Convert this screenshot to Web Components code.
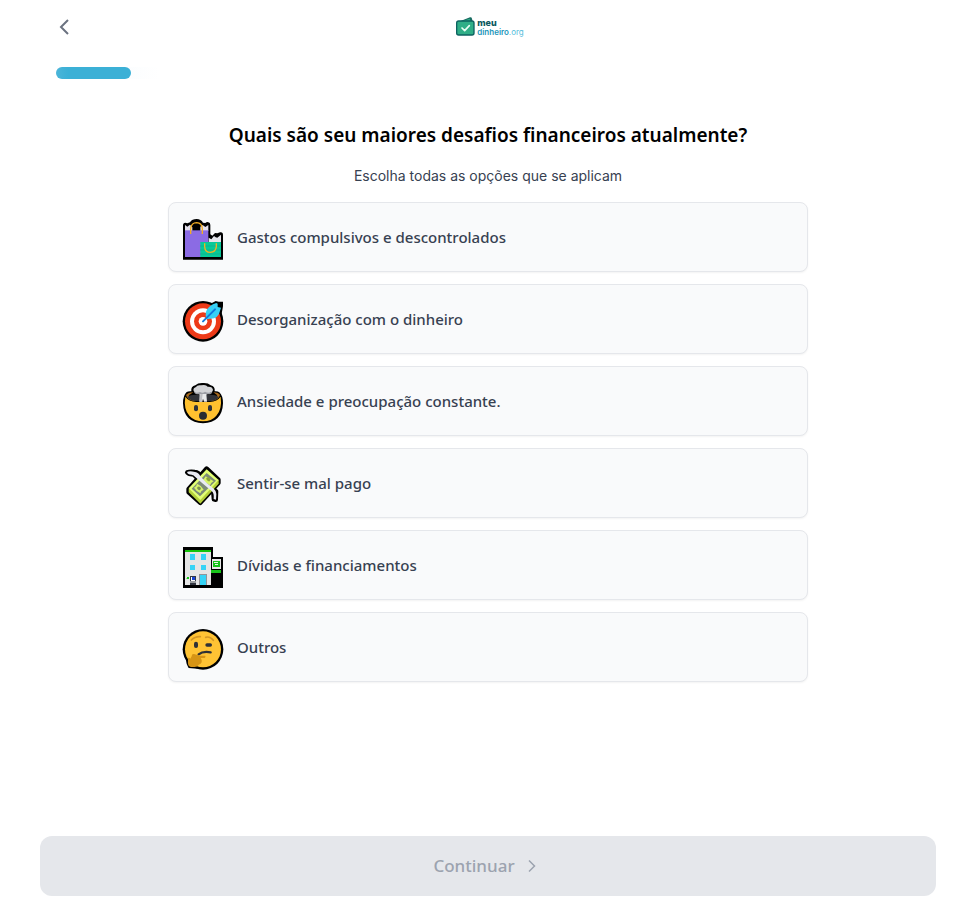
<!DOCTYPE html>
<html lang="pt-BR">
<head>
<meta charset="utf-8">
<meta name="viewport" content="width=device-width, initial-scale=1">
<title>Meu Dinheiro</title>
<style>
body { margin: 0; background: #fff; color: #000; font-family: "Noto Sans", "Open Sans", sans-serif; }
</style>
</head>
<body>
<quiz-page>
  <quiz-header slot="header"></quiz-header>
  <quiz-progress slot="header" value="9"></quiz-progress>
  <quiz-question>
    <span slot="title">Quais são seu maiores desafios financeiros atualmente?</span>
    <span slot="hint">Escolha todas as opções que se aplicam</span>
    <quiz-option icon="bags">Gastos compulsivos e descontrolados</quiz-option>
    <quiz-option icon="target">Desorganização com o dinheiro</quiz-option>
    <quiz-option icon="mind">Ansiedade e preocupação constante.</quiz-option>
    <quiz-option icon="money">Sentir-se mal pago</quiz-option>
    <quiz-option icon="bank">Dívidas e financiamentos</quiz-option>
    <quiz-option icon="think">Outros</quiz-option>
  </quiz-question>
  <quiz-continue slot="footer">Continuar</quiz-continue>
</quiz-page>
<script>
const icons = {
bags: `<svg viewBox="48 36 126 150" aria-hidden="true">
  <path fill="#000" d="M51 76q0-8 7-8l6 2 8-3q6-10 20-10 13 0 19 11l7 1q5-4 9-2 6 1 6 8v28l6 4 8-8 7 1 8-3q9-2 9 8v74H51z"/>
  <path fill="#e3dfeb" d="M57 93V75l7 5 8-6 7 8v11zM103 93V80l7-5 8 6 9-6v18z"/>
  <path fill="#8b6be4" d="M57 91h70v80H57z"/>
  <path fill="none" stroke="#f3ad22" stroke-width="4" d="M74 102V86q2-18 18-18 16 1 17 18v16"/>
  <path fill="#e4e5ec" d="M128 126v-13l8 5 8-10 5 4 5 1 11-9v22z"/>
  <path fill="#06ca99" d="M103 126h62v45h-62z"/>
  <path stroke="#14aa86" stroke-width="3" stroke-dasharray="4 2" d="M103 138h62M103 150h62M103 162h62"/>
  <path fill="none" stroke="#f0b321" stroke-width="4" d="M116 130v10q1 17 17 17t18-17v-10"/></svg>`,
target: `<svg viewBox="48 30 126 150" aria-hidden="true">
  <circle cx="111" cy="112" r="61"/><path d="M121 66l28-15 9 2h13v14l-4 22-14 24-35 7z"/>
  <circle cx="111" cy="112" r="54" fill="#ed3a18"/><circle cx="111" cy="112" r="39" fill="#fff"/>
  <circle cx="111" cy="112" r="27" fill="#ed3a18"/><circle cx="111" cy="112" r="13" fill="#fff"/>
  <path fill="#38d1f5" d="M119 96q-2-24 22-35l10-4 4 2v10l10 2-2 6q-5 28-32 27l-8 2z"/>
  <path stroke="#1378dc" stroke-width="6" stroke-linecap="round" d="M111 112l36-36"/></svg>`,
mind: `<svg viewBox="48 30 126 150" aria-hidden="true">
  <path d="M51 112q0-24 11-34 6-3 14-2-2-15 12-18 8-8 23-7 15-1 23 7 14 3 12 18 9-1 14 3 11 10 11 33-2 58-60 60-58-2-60-60z"/>
  <path fill="#ffc12f" d="M58 92q10 14 33 16h40q23-2 33-16 5 37-13 57-14 17-40 17t-41-17Q52 129 58 92z"/>
  <path fill="#a8691c" d="M60 87q6-7 22-8l-14 9 10 9 20 8H84q-20-3-24-18zM142 79q16 1 20 8-4 15-26 18h-12l20-8 10-9z"/>
  <path fill="#303238" d="M64 93q12-9 39-6v19q-30 1-39-13zM119 87q27-3 39 6-8 14-39 13z"/>
  <path fill="#d2d3d6" d="M83 75q-3-9 7-12 3-7 15-5 15-4 20 4 15-1 16 10-2 10-18 10H99q-13 2-16-7z"/>
  <path fill="#9c9ea5" d="M84 78q8 4 18 0 8 5 15-1 11 6 22 0-2 9-14 8-8 4-14 0-6 4-13 0-12 0-14-7z"/>
  <path fill="#e8e9eb" d="M101 84h20l2 23h-9l-3-9-2 9h-9z"/><path fill="#bebfc3" d="M103 84h7l-3 23h-6z"/>
  <rect x="84" y="117" width="12" height="19" rx="6" fill="#303238"/><rect x="126" y="117" width="12" height="19" rx="6" fill="#303238"/>
  <circle cx="111" cy="149" r="12" fill="#292c31"/></svg>`,
money: `<svg viewBox="48 30 126 150" aria-hidden="true">
  <g stroke="#000" stroke-width="14" stroke-linejoin="round" fill="#000"><path d="M68 123l54-61 35 33v10l-54 59-35-31z"/>
  <path d="M64 73q8-3 22-1 13 1 17 13l47 45-1 25-5-1-2-23-39-32-20-20-14-2z"/></g>
  <path fill="#b4cf3a" d="M68 122v11l35 34 55-60V95z"/>
  <path fill="#e2ff75" d="M68 121l54-57 36 32-55 60z"/>
  <path fill="#7d8b77" d="M77 122l45-47 28 23-48 47z"/>
  <path fill="#d6f36a" d="M84 119q8-3 9-12 13 5 20 18-8 2-10 11-11-5-19-17zM107 97q8-3 12-12l24 15q-8 3-11 12z"/>
  <ellipse cx="99" cy="121" rx="6" ry="5" fill="#7d9252" transform="rotate(40 99 121)"/>
  <ellipse cx="127" cy="94" rx="7" ry="5" fill="#8ba33d" transform="rotate(40 127 94)"/>
  <path fill="#e9eaf2" d="M63 72q8-4 24 0 12 2 16 13l19 20 20 16q9 8 9 17l-1 17-7-2q2-18-6-24l-28-23-22-20q-3-5-10-6-12 0-14-8z"/></svg>`,
bank: `<svg viewBox="48 30 126 150" shape-rendering="crispEdges" aria-hidden="true">
  <path d="M50 52h91v29h31v92H50z"/><path fill="#e5e5e5" d="M57 66h77v98H57z"/><path fill="#14c30b" d="M57 59h77v8H57z"/>
  <path fill="#36d3f6" d="M72 73h16v16H72zM104 73h15v16h-15zM72 105h16v15H72zM104 105h15v15h-15z"/>
  <path fill="#929398" d="M98 131h25v34H98zM72 137h18v4H72z"/><path fill="#36d3f6" d="M102 136h17v29h-17z"/>
  <path fill="#333742" d="M72 139h18v26H72z"/><path fill="#999ca0" d="M73 154h17v4H73z"/><path fill="#fff" d="M75 140h12v12H75z"/><path fill="#1442d4" d="M77 142h9v8h-9z"/>
  <path fill="#e8e8e8" d="M137 88h28v29h-28z"/><path fill="#17c41a" d="M141 93h20v18h-20zM134 120h31v9h-31zM62 142h8v4h-8z"/>
  <path fill="#e7f8e5" d="M144 96h13v3h-13zM147 102h8v2h-8zM145 107h13v2h-13z"/><path fill="#94e488" d="M59 143h5v3h-5z"/></svg>`,
think: `<svg viewBox="48 30 126 150" aria-hidden="true">
  <circle cx="111" cy="112" r="61"/><path d="M61 135h22l40 26-29 9-26-2q-10-15-7-33z"/>
  <circle cx="111" cy="112" r="54" fill="#ffc334"/>
  <path fill="none" stroke="#d39725" stroke-width="5" stroke-linecap="round" d="M76 84q11-11 27-10M119 76q13-4 23 9"/>
  <rect x="84" y="89" width="12" height="19" rx="6" fill="#2f3136"/><rect x="118" y="94" width="20" height="10" rx="5" fill="#2f3136"/>
  <path fill="none" stroke="#2f3136" stroke-width="7" stroke-linecap="round" d="M98 127q12-10 36-6"/>
  <path fill="#d69415" d="M66 138q5-2 7 2l4-7q0-8 7-7l17 5h17q2 7-5 7h-9q5 6 3 13-2 6-9 7-5 8-14 7H75q-9-2-9-12z"/></svg>`
};

class QuizElement extends HTMLElement {
  constructor() {
    super();
    this.attachShadow({ mode: 'open' }).innerHTML = this.template();
  }
}

customElements.define('quiz-page', class extends QuizElement {
  template() { return `<style>
    :host { display: flex; flex-direction: column; box-sizing: border-box; min-height: 100vh; padding: 0 36px 12px 40px; }
    header { padding: 0 16px; }
    main { flex: 1; padding: 40px 0 24px; }
  </style><header><slot name="header"></slot></header><main><slot></slot></main><footer><slot name="footer"></slot></footer>`; }
});

customElements.define('quiz-header', class extends QuizElement {
  template() { return `<style>
    :host { display: grid; grid-template-columns: 1fr auto 1fr; align-items: center; height: 54px; }
    button { justify-self: start; display: flex; padding: 0; border: 0; background: none; cursor: pointer; }
    a { display: flex; align-items: center; gap: 2px; text-decoration: none; color: #0b5960; padding-left: 4px; }
    .name { display: grid; font: 800 9px/10px Inter, sans-serif; }
    .name span + span { font-weight: 600; font-size: 8px; line-height: 8px; color: #2397bb; }
    small { font-size: 8px; font-weight: 400; color: #55bddb; }
  </style>
  <button type="button" aria-label="Voltar"><svg width="16" height="16" viewBox="0 0 16 16" fill="none" stroke="#6b7280" stroke-width="2"><path d="M12 1L5 8l7 7"/></svg></button>
  <a href="#"><svg width="19" height="20" viewBox="0 0 57 60" aria-hidden="true">
    <path fill="#176b61" d="M8 14L42 1q5-1 6 4l2 9z"/><path fill="#2fae87" d="M19 12l22-7 3 8z"/>
    <rect x="2" y="12" width="52" height="42" rx="6" fill="#2fae87" stroke="#0d6260" stroke-width="4"/>
    <path fill="none" stroke="#e9fff5" stroke-width="5" stroke-linecap="round" stroke-linejoin="round" d="M18 33l8 8 14-15"/></svg>
    <span class="name"><span>meu</span><span>dinheiro<small>.org</small></span></span></a>`; }
});

customElements.define('quiz-progress', class extends QuizElement {
  template() { return `<style>
    :host { display: block; margin-top: 13px; }
    .track { height: 12px; border-radius: 6px; background: linear-gradient(90deg, #f3f9fd, #fff 12%); }
    .bar { height: 12px; width: 75px; border-radius: 6px; background: linear-gradient(90deg, #4bb5d9, #3bb0d6 16%); }
  </style><div class="track" role="progressbar" aria-label="Progresso" aria-valuemin="0" aria-valuemax="100"><div class="bar"></div></div>`; }
  connectedCallback() {
    const value = this.getAttribute('value');
    this.shadowRoot.querySelector('.track').setAttribute('aria-valuenow', value);
  }
});

customElements.define('quiz-question', class extends QuizElement {
  template() { return `<style>
    :host { display: block; max-width: 640px; margin: 0 auto; text-align: center; }
    h1 { margin: 0; font-size: 19px; line-height: 32px; font-weight: 600; }
    p { margin: 15px 0 16px; font: 400 14px/20px Inter, sans-serif; color: #374151; }
    .options { display: grid; gap: 12px; }
  </style><h1><slot name="title"></slot></h1><p><slot name="hint"></slot></p><div class="options"><slot></slot></div>`; }
});

customElements.define('quiz-option', class extends QuizElement {
  template() { return `<style>
    :host { display: block; }
    button { display: flex; align-items: center; gap: 13px; box-sizing: border-box; width: 100%; min-height: 70px; padding: 8px 13px;
      border: 1px solid #e5e7eb; border-radius: 8px; background: #f9fafb; box-shadow: 0 1px 2px rgba(0,0,0,.05);
      color: #374151; font-family: inherit; font-size: 15px; line-height: 24px; font-weight: 500; text-align: left; cursor: pointer; }
    button[aria-pressed="true"] { border-color: #3bb0d6; }
    .icon { display: flex; }
    svg { width: 42px; height: 50px; }
  </style><button type="button" aria-pressed="false"><span class="icon"></span><span><slot></slot></span></button>`; }
  connectedCallback() {
    this.shadowRoot.querySelector('.icon').innerHTML = icons[this.getAttribute('icon')];
    const button = this.shadowRoot.querySelector('button');
    button.onclick = () => button.setAttribute('aria-pressed', button.getAttribute('aria-pressed') !== 'true');
  }
});

customElements.define('quiz-continue', class extends QuizElement {
  template() { return `<style>
    :host { display: block; }
    button { display: flex; align-items: center; justify-content: center; gap: 8px; width: 100%; height: 60px; border: 0; border-radius: 12px;
      background: #e5e7eb; color: #9ca3af; font-family: inherit; font-size: 17px; line-height: 28px; font-weight: 500; }
  </style><button type="button" disabled><slot></slot><svg width="20" height="20" viewBox="0 0 40 40" fill="none" stroke="#9ca3af" stroke-width="3" aria-hidden="true"><path d="M12 9l11 11-11 11"/></svg></button>`; }
});
</script>
</body>
</html>
